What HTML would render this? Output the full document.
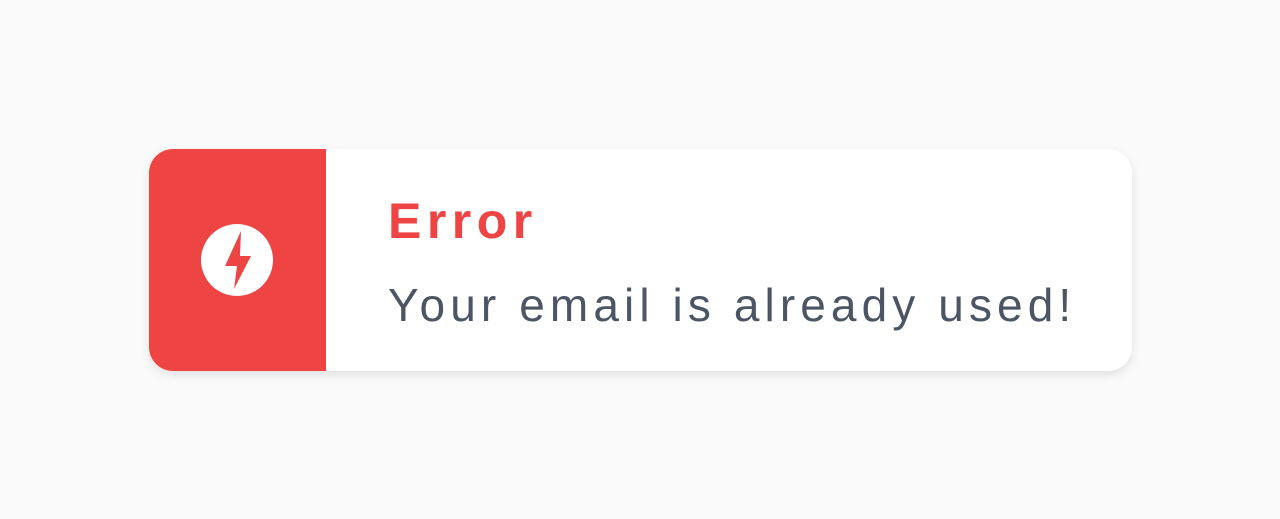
<!DOCTYPE html>
<html><head><style>
body{margin:0;width:1280px;height:519px;background:#fafafa;position:relative;overflow:hidden;font-family:"Liberation Sans",sans-serif}
.card{position:absolute;left:149px;top:149px;width:983px;height:222px;background:#fff;border-radius:24px;overflow:hidden;box-shadow:0 4px 10px rgba(0,0,0,0.10)}
.red{position:absolute;left:0;top:0;width:177px;height:222px;background:#ef4444}
.t{position:absolute;left:239px;top:43px;font-size:50px;font-weight:bold;color:#ef4444;letter-spacing:5.5px}
.b{position:absolute;left:239px;top:129px;font-size:46px;color:#4b5563;letter-spacing:5.1px;white-space:nowrap}
</style></head><body>
<div class="card"><div class="red">
<svg width="177" height="222" viewBox="149 149 177 222"><circle cx="237" cy="260" r="36" fill="#fff"/><polygon points="241,231 225,266 237,266 234,289 251,256 240,256" fill="#ef4444"/></svg>
</div>
<div class="t">Error</div>
<div class="b">Your email is already used!</div>
</div>
</body></html>
